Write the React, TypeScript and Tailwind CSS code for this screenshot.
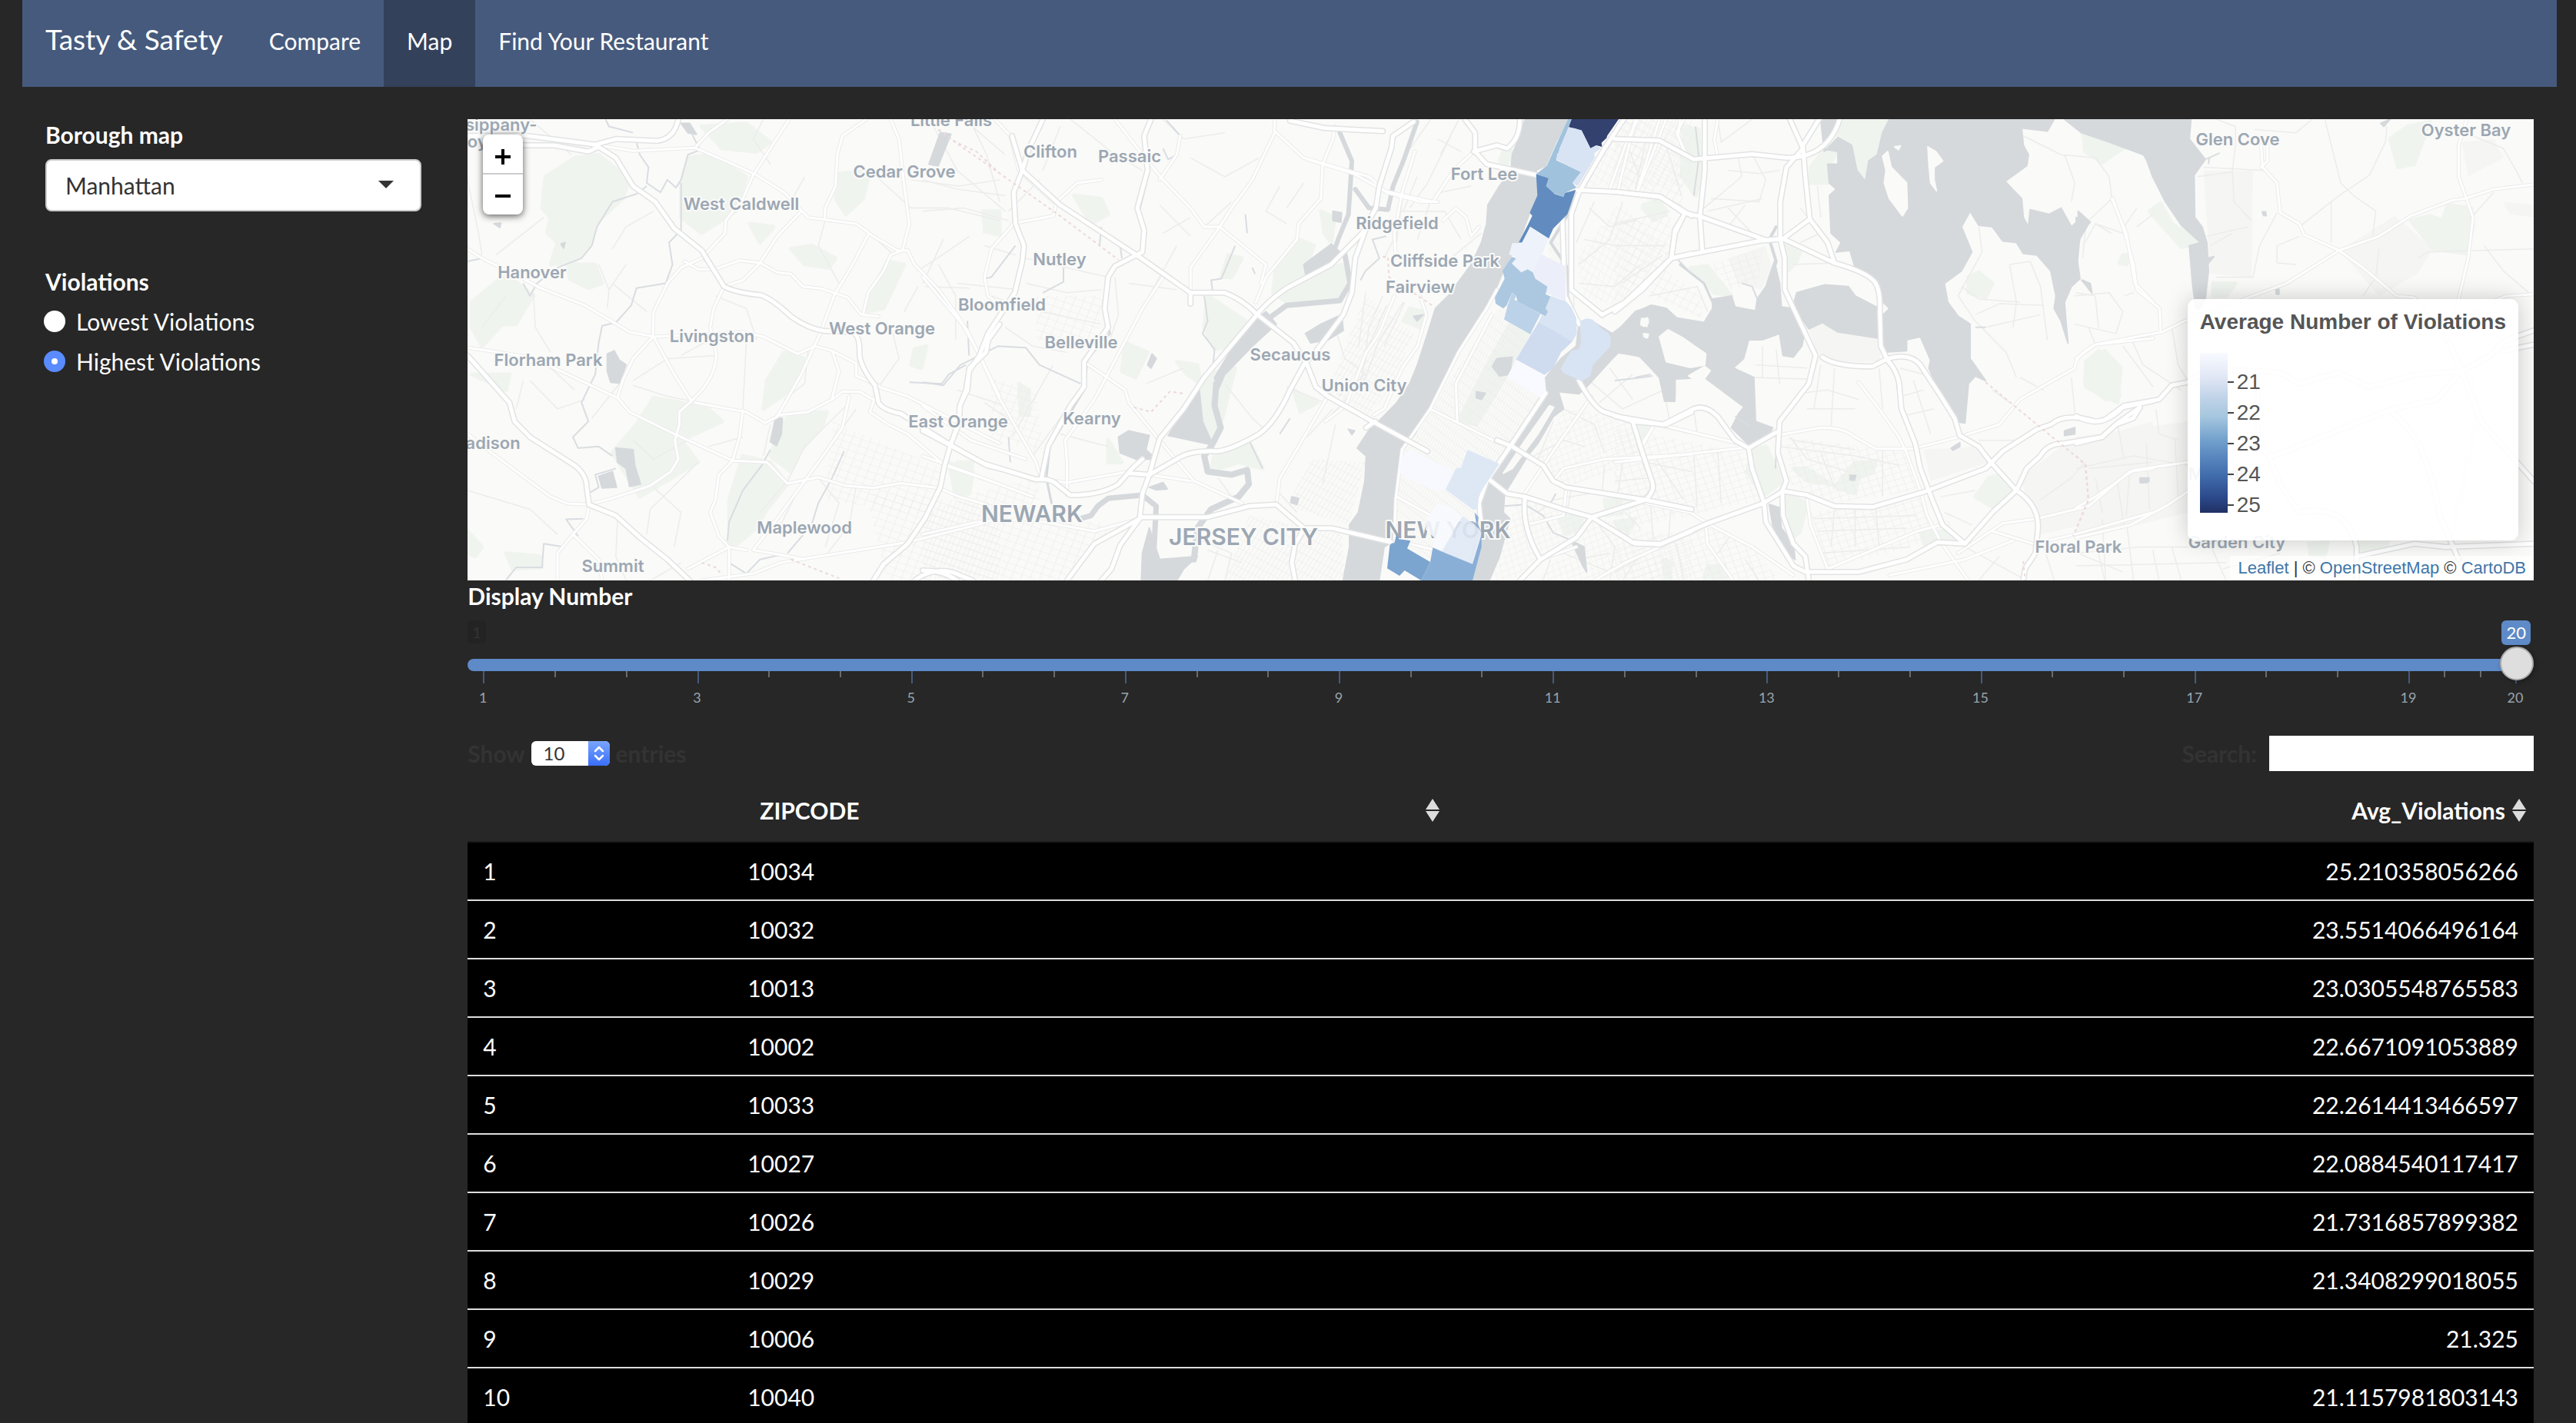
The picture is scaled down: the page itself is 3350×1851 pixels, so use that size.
import React from "react";

type Tile = {
  id: string;
  transform: string;
  grey?: string[];
  green: string[];
  water: string[];
  land?: string[];
  channels?: [string, number][];
  streams: string[];
  minor: string[];
  roads: string[];
  motorways: string[];
  borders: string[];
  grids?: [string, string][];
};

const tiles: Tile[] = [
  {
    id: "west",
    transform: "translate(600 140) scale(0.44643 0.40816)",
    green: [
      "M245 220 L330 160 L400 150 L490 230 L470 290 L390 370 L380 430 L330 490 L260 500 L280 430 L250 400 L260 350 L235 320 Z",
      "M660 160 L720 150 L830 220 L800 330 L700 400 L640 350 L640 240 Z",
      "M700 60 L830 50 L900 110 L860 140 L760 130 Z",
      "M30 620 L130 530 L210 600 L180 650 L160 690 L120 690 L60 760 L30 700 Z",
      "M310 500 L390 500 L410 560 L370 575 L315 545 Z",
      "M1240 490 L1290 500 L1230 640 L1180 650 L1195 590 Z",
      "M560 925 L640 940 L720 960 L760 1000 L640 1060 L690 1130 L520 1240 L440 1100 L510 1010 Z",
      "M960 975 L1065 970 L1050 1020 L990 1090 L960 1160 L900 1110 L930 1020 Z",
      "M820 1110 L900 1130 L950 1200 L890 1280 L860 1340 L780 1410 L780 1250 Z",
      "M940 780 L1000 800 L960 900 L880 960 L890 870 Z",
      "M1100 210 L1190 200 L1170 290 L1120 340 L1090 290 Z",
      "M960 450 L1020 440 L1090 480 L1070 510 L1000 500 Z",
      "M840 370 L910 380 L870 430 Z",
      "M18 1350 L60 1400 L40 1430 L18 1420 Z",
      "M30 850 L140 850 L130 900 Z",
      "M1520 330 L1568 330 L1568 405 L1525 395 Z",
      "M1320 770 L1355 760 L1340 830 L1310 820 Z",
      "M1420 1130 L1490 1160 L1480 1230 L1440 1240 Z",
      "M130 1420 L230 1430 L235 1465 L150 1470 Z",
    ],
    water: [
      "M425 785 L445 775 L460 805 L480 820 L460 878 L435 875 L425 840 Z",
      "M450 1085 L500 1090 L505 1140 L522 1200 L490 1207 L480 1150 L455 1130 Z",
      "M400 1175 L440 1160 L452 1210 L410 1212 Z",
      "M1395 80 L1422 85 L1385 185 L1362 180 Z",
      "M915 990 L935 990 L932 1040 L918 1077 L900 1065 Z",
      "M640 50 L665 50 L685 85 L660 80 Z",
      "M95 370 L115 368 L112 382 Z",
      "M290 435 L302 430 L298 448 Z",
    ],
    streams: [
      "M510 110 L520 150 L545 190 L540 240 L580 270 L600 230 L625 255 L640 230 L660 150 L695 135 L670 80",
      "M640 240 L640 390 L605 430 L615 500 L595 560 L510 575 L495 630 L450 685 L410 695 L400 750 L390 850 L350 940 L370 1000 L325 1050 L340 1085 L400 1080 L440 1110",
      "M450 1150 L390 1170 L400 1210 L370 1230",
      "M540 250 L510 275 L440 300 L395 380 L380 440 L350 480 L280 510 L220 560 L200 600 L180 560",
      "M900 1090 L875 1140 L820 1220 L780 1320 L775 1380",
      "M1115 1095 L1080 1180 L1040 1260 L1020 1330 L950 1420",
      "M130 1505 L160 1465 L235 1465 L240 1390 L300 1400",
      "M355 1310 L305 1312 L340 1365",
      "M1305 875 L1400 880 L1420 850 L1470 820",
      "M18 490 L60 480 M420 37 L430 60 L500 80",
      "M780 1450 L830 1485 L870 1440 L930 1425",
    ],
    minor: [
      "M18 1220 L200 1280 L280 1360 M130 600 L60 700 M210 590 L215 700 L260 780 M430 580 L425 640 M480 500 L430 580 L400 500",
      "M540 650 L440 560 M200 37 L320 150 M100 470 L240 350 M440 450 L480 380 L560 330 M18 230 L50 400 L60 470",
      "M460 880 L380 990 M500 885 L600 920 L670 935 M742 790 L600 800 L500 870 M830 750 L820 960 M740 600 L830 640 L860 740",
      "M660 1060 L560 1120 L500 1060 M540 1360 L550 1280 L690 1130 M560 1210 L640 1290 L620 1400 M455 1310 L450 1430 L480 1507",
      "M1000 220 L960 300 L990 330 M880 37 L850 100 L900 180 M1060 357 L1040 440 L1100 560 M1200 410 L1260 470",
      "M870 1290 L950 1190 L1000 1080 L1130 940 M1060 1100 L1150 960 M1040 1180 L1100 1260 L1060 1400 M1150 1205 L1130 1330 L1060 1430",
      "M1200 210 L1310 320 L1420 320 L1568 360 M1310 230 L1450 250 L1568 230 M1350 570 L1480 575 M1330 520 L1400 470 L1480 410",
      "M1250 690 L1275 800 L1215 890 M1290 650 L1330 570 M1480 37 L1530 150 L1568 300 M1390 500 L1440 600 L1440 740",
      "M180 870 L160 960 M200 870 L280 960 L360 930 M260 830 L330 900 M980 1220 L930 1330 M550 1507 L640 1450",
      "M700 480 L740 520 M740 730 L640 790 M820 1050 L720 1080 M900 1010 L880 1110 M1010 770 L1000 880 L940 930",
    ],
    roads: [
      "M390 118 L500 138 L680 128 L780 175 L860 215 L940 270 L1010 350 L1060 357 L1150 370 L1200 410 L1270 455 L1300 455 L1320 500 L1390 580 L1450 670 L1510 790 L1568 920",
      "M955 37 L850 215 L820 290 L770 360 L768 400 L700 480 L640 510 L600 560 L560 650 L558 730",
      "M1180 37 L1110 90 L1095 150 L1090 250 L1060 320 L1058 357",
      "M680 128 L720 80 L775 37",
      "M1250 37 L1275 100 L1290 250 L1305 370 L1285 455 L1250 470 L1230 520 L1185 590 L1170 660 L1215 665",
      "M990 330 L920 410 L870 495 L820 550 L765 570 L735 640 L725 700 L742 780 Q745 860 670 935 L635 970 L635 1010 L622 1060 L632 1120 L610 1160 L550 1205 L440 1245 L372 1265",
      "M650 490 L690 515 L740 515 L810 487 L870 495 L920 525 L960 530 L995 570 L1050 577 L1125 605 L1165 660",
      "M18 450 L60 480 L180 545 L230 575 L360 630 L490 715 L560 730 L660 725 L820 715 L880 730 L980 785 L1030 760 L1080 775 L1150 815 L1150 855 L1215 885",
      "M1185 405 L1140 500 L1085 600 L1045 720 L990 850 L920 985 L885 1005 L830 970 L680 940",
      "M560 730 L620 850 L670 935 M558 730 L500 800 L470 870 L455 925 L490 970 L620 1040 L790 1125 L890 1130 L950 1198 L1040 1178 L1120 1205 L1200 1212 L1280 1197 L1390 1212 L1450 1240 L1530 1265",
      "M18 765 L200 795 L300 845 L455 925",
      "M920 980 L1010 970 L1080 930 L1110 905 L1160 905 L1215 940",
      "M820 965 L810 1050 L790 1125 L750 1170 L740 1250 L725 1290 L750 1365 L780 1400 L830 1410",
      "M660 1470 L780 1400 L780 1507 M700 1507 L850 1485 L930 1450 L1300 1385 L1520 1325",
      "M18 1040 L100 1110 L260 1240 L310 1262 L372 1265 L365 1310 L325 1360 L280 1420 L280 1507",
      "M325 1360 L400 1440 L410 1507",
      "M1000 1190 L920 1310 L850 1410 L930 1425 L1000 1440",
      "M1215 890 L1190 970 L1245 1010 L1300 1040 L1408 1140 L1568 1200",
      "M1215 890 L1300 920 L1440 1000 L1568 1070",
      "M1130 920 L1110 1020 L1060 1100 L1000 1190",
      "M1080 775 L1100 840 L1080 925",
    ],
    motorways: [
      "M18 90 L180 88 L390 118 L450 100 L570 106 Q620 100 632 37",
      "M180 120 L270 120 L370 140 L400 125 L450 160 L500 250 L565 300 L620 385 L700 455 L765 570 Q800 590 870 597 Q900 605 960 665 Q1010 705 1060 712 L1140 715 Q1162 725 1160 790 Q1165 830 1205 885 L1215 940 Q1230 965 1280 975 L1330 1010 L1425 1075 L1530 1140 L1568 1150",
      "M18 790 L140 940 L155 1000 L200 1050 L330 1140 Q365 1170 365 1210 L372 1265 L450 1300 L520 1370 L600 1440 L665 1507",
      "M1568 690 L1535 740 L1528 780 L1480 830 L1470 900 L1452 950 L1450 1000 L1425 1075 L1408 1140 L1395 1210 L1350 1310 L1300 1390 L1230 1455 L1200 1507",
      "M1320 1507 Q1370 1465 1430 1480 L1490 1507",
    ],
    borders: ["M1390 70 L1440 110 L1500 140 L1568 210", "M700 1450 L740 1465 L760 1490", "M960 1440 L1100 1500"],
    grids: [
      ["M1180 1230 L1568 1260 L1568 1507 L1240 1507 Z", "g-newark"],
      ["M1080 1000 L1400 1150 L1350 1300 L1060 1250 Z", "g-newark"],
    ],
  },
  {
    id: "hackensack",
    transform: "translate(1200 140) scale(0.44643 0.40816)",
    green: [
      "M1030 500 L1095 420 L1140 440 L1110 520 L1160 530 L1220 500 L1240 560 L1200 610 L1060 620 L1020 590 Z",
      "M830 600 L940 680 L900 760 L850 770 L820 700 Z",
      "M820 850 L910 830 L870 1000 L830 1060 L805 960 Z",
      "M850 1100 L950 1060 L990 1150 L920 1130 L840 1160 Z",
      "M590 750 L655 780 L620 860 L580 840 Z",
      "M440 280 L520 290 L540 340 L490 370 Z",
      "M1160 330 L1200 350 L1190 430 L1170 400 Z",
      "M180 335 L220 335 L215 400 L180 395 Z",
      "M1080 900 L1150 940 L1100 970 Z",
      "M540 1060 L580 1130 L540 1130 Z",
      "M100 1130 L145 1130 L130 1230 L100 1220 Z",
      "M890 470 L930 480 L900 540 L870 540 Z",
      "M740 810 L800 820 L810 880 L770 850 Z",
      "M280 880 L310 900 L310 980 L285 980 Z",
      "M1420 640 L1460 650 L1450 700 L1400 680 Z",
    ],
    water: [
      "M1110 500 L1190 435 L1215 460 L1180 510 L1115 530 Z",
      "M1195 330 L1220 335 L1218 365 L1195 360 Z",
      "M1000 650 L1030 690 L960 760 L880 850 L860 900 L850 860 L900 770 L930 710 Z",
      "M805 895 L815 1000 L845 1075 L715 1045 Z",
      "M640 1420 L660 1340 L690 1440 L800 1430 L760 1470 L740 1507 L637 1507 Z",
      "M570 1050 L600 1030 L660 1045 L650 1090 L680 1120 L620 1120 L575 1100 Z",
      "M1115 720 L1160 690 L1220 660 L1225 710 L1180 740 L1130 750 Z",
      "M660 1210 L700 1195 L712 1215 L680 1218 Z",
      "M1075 1240 L1095 1245 L1090 1265 L1072 1258 Z",
      "M20 180 L60 80 L82 85 L45 185 Z",
      "M668 785 L680 800 L665 830 L655 820 Z",
      "M1430 665 L1458 660 L1440 680 Z",
      "M1240 1025 L1258 1030 L1250 1042 Z",
    ],
    channels: [
      ["M1215 80 L1250 170 L1245 260 L1240 340 L1210 420 L1200 450", 6],
      ["M1230 470 L1245 560 L1215 615 L1060 630 L1010 670", 7],
      ["M855 880 L850 950 L868 1020 L840 1080 L820 1110 L830 1160 L900 1170 L945 1155 L950 1200 L920 1240 L840 1280 L800 1340 L790 1440", 8],
      ["M672 1440 L680 1270 L640 1235 L540 1245 L510 1270 L490 1300 L460 1310", 7],
      ["M1440 45 L1400 170 L1370 250 L1355 325 L1300 320 L1260 260", 6],
      ["M660 200 L630 330 L650 400 L640 460 L545 520 L530 640 L545 720 L480 800 L470 900 L370 1080 L360 1180 L375 1260", 3],
    ],
    streams: [
      "M0 875 L60 885 L110 820 L220 760 L300 765 L340 820 L460 880",
      "M270 440 L200 540 L180 545",
      "M410 510 L410 555 L350 590",
      "M820 600 L830 680 L815 720 L850 770 L845 830",
      "M910 440 L870 545 L840 550 L845 590",
      "M700 130 L715 165 L740 150 L750 90 L710 40",
      "M940 340 L945 400 M960 510 L968 530 M990 1150 L950 1060",
      "M1070 990 L1040 1040 M250 1050 L255 1130",
      "M520 380 L515 440 M575 440 L580 480",
      "M1350 410 L1310 420 L1330 480 L1290 520 L1275 550",
      "M130 680 L135 790",
    ],
    minor: [
      "M20 37 L100 200 L240 330 M120 37 L240 150 M340 230 L250 330 M400 60 L350 200 M430 37 L560 150 L640 200 M300 480 L420 510 L540 540",
      "M300 560 L420 590 L520 580 M200 600 L300 640 L520 690 M560 540 L570 660 L545 740 M180 440 L270 470 M740 440 L640 640 L560 800 L500 930",
      "M0 230 L100 260 L240 280 M0 330 L120 320 L250 360 M60 420 L0 560 M100 560 L280 580 M240 700 L320 760 L420 780",
      "M700 37 L760 100 L880 80 M780 160 L880 220 L980 160 M820 380 L900 300 M1040 250 L1000 330 L1060 370 M1110 240 L1060 320",
      "M700 400 L780 350 M690 310 L780 410 M600 560 L740 580 M650 880 L760 830 M880 880 L960 990 L1000 1030 M1170 940 L1060 890",
      "M1200 700 L1230 800 L1290 850 L1210 920 M1290 590 L1270 760 M1340 600 L1300 700 L1290 780 M1400 620 L1330 740 L1290 860 L1190 980",
      "M1480 37 L1420 130 M1500 100 L1568 140 M1400 270 L1380 430 M1380 330 L1520 330 L1568 420 M1440 220 L1400 330",
      "M830 1410 L930 1450 M750 1350 L900 1420 L880 1507 M860 1180 L900 1240 M1040 1230 L1090 1290 M830 1507 L860 1410",
      "M380 820 L260 1050 M440 930 L320 1110 M100 900 L240 950 M180 940 L260 1000 M400 1040 L540 1080",
    ],
    roads: [
      "M560 37 L640 150 L700 230 L780 320 L820 380 L865 380 L1000 500 L985 560",
      "M1025 80 L960 230 L900 320 L865 380 L780 510 L780 590",
      "M1025 37 L1025 75 L1110 160 L1300 220 L1350 270 L1450 300 L1500 300",
      "M1200 60 L1195 100 L1165 180 L1160 290 L1095 370 L1090 420 L1000 540 L970 620",
      "M0 540 L130 710 L165 790 L220 920 L330 1130 L345 1185",
      "M470 810 L590 900 L600 940 L690 1060 L790 1190 L930 1260",
      "M260 370 L380 345 L390 300 L450 240 L520 230",
      "M1180 920 L1100 1070 L1040 1180 L1030 1265",
      "M420 1235 L420 1130 L415 1060 L500 930 L640 640 L700 540",
      "M345 1185 L420 1195 L600 1160 L780 1190",
      "M0 950 L140 1060 L300 1120",
      "M210 37 L255 90 L280 200 L380 300",
      "M0 1110 L150 1170 L320 1240 M0 1360 L160 1320 L330 1310 M632 1310 L500 1350 L300 1310",
      "M750 90 L740 150 L690 230",
      "M265 370 L200 450 L180 540 L190 600 L240 640",
    ],
    motorways: [
      "M350 37 L310 130 L290 200 L265 270 L270 370 L295 440 L290 490 L268 590 L190 720 L165 790 L135 840 L130 900 L108 950 L105 1010 L80 1075",
      "M665 37 L645 90 L655 200 L625 320 L645 390 L640 460 L560 505 L540 540 L530 640 L540 700 L470 810 L470 890 L430 950 L365 1080 L345 1185",
      "M260 90 L290 200 L400 310 L630 475 L780 590 L880 590 Q930 610 975 660 L1080 750 L1120 820 L1145 890 L1180 920 L1310 1000 L1470 1095",
      "M1430 45 L1370 90 L1365 130 L1330 250 L1320 320 L1280 400 L1190 500 L1060 575 Q1000 620 970 665 L820 860 L760 960 L690 1055 L660 1170 L640 1230 L632 1310 L575 1395 L550 1470 L520 1507",
      "M1290 390 L1260 480 L1250 590 L1225 660 L1150 770 L1110 820 L1070 900 Q1030 1000 980 1040 Q900 1090 860 1095 Q780 1090 740 1120 L660 1170 L600 1165",
      "M1070 42 L1170 65 L1340 75",
      "M0 1030 L78 1075 L180 1135 L330 1185 Q370 1180 390 1200 L430 1235 Q520 1235 570 1200 L610 1150 L640 1120",
      "M632 1305 L830 1305 L950 1270 L1030 1265 L1110 1340 L1190 1340 L1365 1385",
      "M1110 1345 L1085 1390 L1075 1450 L1085 1507",
      "M632 1310 L500 1390 L420 1507",
      "M780 590 L780 625",
      "M0 1475 Q60 1475 100 1507",
    ],
    borders: [
      "M45 70 L120 130 L160 160 L400 345 L570 485",
      "M615 955 L665 970 L720 905 L765 912",
      "M1340 475 L1355 475 L1358 540 L1430 590 L1490 635",
    ],
    grids: [
      ["M150 1230 L330 1180 L350 1300 L560 1330 L420 1507 L0 1507 L0 1300 Z", "g-newark"],
      ["M200 860 L330 900 L350 1100 L200 1060 Z", "g-newark"],
      ["M1130 1120 L1290 1130 L1240 1330 L1060 1270 Z", "g-hudson"],
      ["M950 1300 L1220 1360 L1230 1507 L880 1507 Z", "g-hudson"],
      ["M1290 600 L1430 720 L1360 900 L1300 980 L1180 900 Z", "g-hudson"],
      ["M330 600 L530 600 L500 780 L330 740 Z", "g-newark"],
    ],
  },
  {
    id: "manhattan",
    transform: "translate(1700 140) scale(0.33333 0.40816)",
    green: [
      "M790 690 L870 720 L815 803 L660 1010 L590 1000 L690 840 Z",
      "M770 130 L800 140 L780 180 L750 170 Z",
      "M1310 310 L1370 295 L1400 340 L1350 360 Z",
      "M400 640 L450 650 L440 700 L380 680 Z",
      "M1160 1250 L1220 1240 L1230 1290 L1170 1300 Z",
      "M980 1310 L1060 1290 L1080 1340 L1010 1360 Z",
      "M1290 1010 L1340 1020 L1305 1070 Z",
      "M1390 1440 L1420 1450 L1415 1507 L1395 1507 Z",
    ],
    water: [
      "M850 37 L825 100 L800 150 L795 200 L750 250 L705 310 L700 370 L680 430 L640 500 L550 600 L500 640 L470 720 L430 820 L400 880 L350 940 L290 990 L240 1030 L195 1085 L230 1110 L225 1190 L200 1290 L165 1330 L165 1400 L140 1507 L280 1507 L300 1400 L340 1380 L345 1280 L358 1180 L365 1100 L420 1040 L480 950 L590 770 L660 680 L740 570 L770 510 L830 420 L870 330 L897 280 L893 200 L930 185 L970 110 L1020 37 Z",
      "M930 860 L990 800 L1050 760 L1060 690 L1110 680 L1190 720 L1240 690 L1290 650 L1340 630 L1400 640 L1440 670 L1500 690 L1500 740 L1370 700 L1370 790 L1420 830 L1500 820 L1500 880 L1440 880 L1430 935 L1395 935 L1390 860 L1340 800 L1215 780 L1190 800 L1090 890 L1060 912 L980 905 L1000 960 L960 985 L900 1070 L860 1110 L800 1190 L770 1230 L765 1290 L790 1310 L750 1430 L710 1507 L645 1507 L680 1400 L670 1260 L710 1190 L800 1080 L935 920 Z",
      "M740 800 L800 795 L790 850 L750 855 L722 825 Z",
      "M660 905 L695 910 L680 930 L660 925 Z",
      "M1030 1380 L1080 1400 L1090 1480 L1075 1460 Z",
    ],
    land: [
      "M945 950 L962 955 L900 1040 L800 1150 L765 1165 L850 1060 Z",
      "M1305 672 L1330 675 L1325 697 L1303 693 Z",
      "M1312 720 L1330 722 L1328 733 L1314 730 Z",
    ],
    channels: [["M1180 100 L1110 190 L1060 260 L1010 350 L950 430 L1015 510 L1015 600 L1058 690", 4]],
    streams: ["M770 1270 L850 1265 L920 1300 L960 1355 L1020 1375", "M970 1230 L950 1260", "M1440 480 L1500 530", "M1280 860 L1340 850"],
    minor: [
      "M1040 700 L1040 600 M1230 300 L1180 420 L1060 500 M1280 60 L1200 200 L1180 260 M1320 110 L1280 260 M1080 420 L1200 440 L1400 440",
      "M1060 560 L1200 570 L1300 500 M1100 320 L1180 380 L1280 360 M1240 100 L1310 250 M1400 120 L1460 280 M1120 300 L1050 430",
      "M1140 940 L1270 850 M1230 960 L1390 900 M1100 870 L1230 960 M1180 830 L1270 930 M1000 960 L1120 1010 L1160 1100 M1340 1010 L1500 1040",
      "M860 1120 L1000 1060 L1080 1080 M900 1120 L960 1000 M1320 1130 L1500 1160 M1030 1220 L1010 1300 M1160 1140 L1150 1230 M1230 1130 L1210 1240",
      "M900 1290 L960 1250 L1100 1230 M850 1330 L960 1300 M1130 1320 L1200 1400 L1180 1507 M1240 1290 L1300 1340 M1000 1420 L1180 1480",
      "M1340 1260 L1350 1390 M1420 1260 L1410 1370 M1300 1420 L1230 1507 M950 1440 L920 1507 M1060 1440 L1180 1420",
      "M590 40 L520 150 M560 90 L470 240 L400 320 M480 300 L430 420 M520 270 L640 250 M560 480 L680 400 M300 480 L350 400",
      "M310 630 L240 760 L200 900 M380 620 L300 760 M0 1050 L100 960 M60 1200 L110 1010 M60 880 L120 940",
    ],
    roads: [
      "M480 960 L750 1070 M480 960 L590 780 L700 640 L740 580",
      "M340 1390 L345 1250 L370 1090 L480 960",
      "M585 1000 L580 880 L720 660",
      "M0 165 L180 210 L300 265 L490 300",
      "M420 140 L370 270 L340 400 L345 480",
      "M490 300 L570 200 L650 140",
      "M530 360 L580 320 L620 350 L640 410 L670 380",
      "M440 600 L465 660 L430 760 L370 830 L300 960 L260 980",
      "M340 600 L280 720 L230 780 L150 950 L70 1000",
      "M1300 1080 L1350 1015 M960 1190 L1000 1150 L1160 1120 L1500 1105",
      "M1110 920 L980 1070 L840 1240",
      "M1170 100 L1370 105 L1500 165 M1470 37 L1440 80 L1480 150",
      "M910 1440 L1050 1400 M350 1240 L550 1330 M400 1390 L500 1410",
      "M1180 260 L1250 100 L1290 37 M1290 265 L1400 37",
      "M850 1330 L1000 1300 L1010 1215",
      "M1120 1507 L1240 1450 L1390 1395",
    ],
    motorways: [
      "M615 37 L655 80 L655 140 L700 180 L895 215",
      "M650 140 L740 120 L780 130 Q830 100 830 37",
      "M1235 37 L1160 130 L1060 270 L1030 340 L1030 580 L1150 660",
      "M995 340 L1005 600 L1060 690",
      "M1050 262 L1200 268 L1380 285 L1500 345",
      "M1150 660 L1240 620 L1420 480 L1500 465",
      "M1465 350 L1435 400 L1420 480",
      "M1060 870 Q1120 960 1160 970 L1270 1000 L1400 1010 L1500 970",
      "M930 910 L800 1070 L700 1190 L670 1260 L680 1340 L650 1440",
      "M710 1185 L780 1230 L850 1240 L1000 1280 L1110 1305 L1280 1390 L1380 1390 L1500 1350",
      "M740 1060 L800 1080 L920 1140 L960 1190 L1010 1210 L1320 1250 L1500 1280",
      "M1110 1305 L1050 1370 L910 1440 L830 1507",
      "M1110 1305 L1320 1250 Q1360 1220 1345 1190 L1300 1080 L1270 1000",
      "M850 1240 Q835 1340 910 1440",
      "M230 1020 L265 1000",
    ],
    borders: [],
    grids: [
      ["M360 1100 L480 960 L780 600 L930 900 L700 1190 L650 1300 L680 1400 L640 1507 L320 1400 L350 1250 Z", "g-manhattan"],
      ["M940 420 L1010 340 L1020 620 L950 600 Z", "g-manhattan"],
      ["M1050 480 L1220 300 L1400 450 L1200 630 L1080 600 Z", "g-bronx"],
      ["M1200 37 L1500 37 L1500 250 L1080 250 Z", "g-bronx"],
      ["M1000 960 L1250 990 L1300 1130 L1000 1210 L900 1120 Z", "g-queens"],
      ["M820 1240 L1110 1310 L910 1440 L800 1507 L720 1507 Z", "g-queens"],
      ["M1110 1305 L1500 1380 L1500 1507 L900 1507 Z", "g-queens"],
    ],
  },
  {
    id: "sound",
    transform: "translate(2100 140) scale(0.44643 0.40816)",
    grey: [
      "M565 705 L605 685 L650 715 L770 735 L775 810 L640 810 L590 780 Z",
      "M1180 1180 L1300 1080 L1568 1000 L1568 1280 L1240 1360 Z",
      "M900 1090 L1060 1080 L1090 1130 L920 1190 Z",
      "M330 480 L440 440 L460 520 L425 580 L360 560 Z",
    ],
    green: [
      "M200 60 L245 70 L250 230 L235 280 L195 220 Z",
      "M570 190 L620 120 L650 140 L625 180 L620 240 L570 240 Z",
      "M80 320 L120 295 L150 325 L110 355 Z",
      "M220 510 L270 505 L340 600 L290 590 Z",
      "M1030 540 L1060 525 L1100 560 L1080 605 L1030 590 Z",
      "M1375 810 L1410 775 L1460 830 L1470 920 L1430 930 L1370 880 Z",
      "M1365 80 L1480 130 L1420 175 L1370 140 Z",
      "M400 1090 L440 1080 L490 1190 L430 1240 L385 1160 Z",
      "M495 1230 L560 1260 L540 1350 L520 1370 Z",
      "M700 1130 L760 1130 L750 1165 L710 1180 L700 1230 L640 1210 Z",
      "M1090 1180 L1120 1170 L1160 1230 L1110 1280 L1050 1240 Z",
      "M890 1350 L960 1350 L1010 1390 L900 1390 Z",
      "M0 1320 L60 1310 L30 1370 Z",
      "M500 440 L540 460 L530 490 L505 520 Z",
      "M1480 470 L1500 470 L1490 500 L1470 495 Z",
      "M520 1150 L560 1150 L630 1200 L560 1190 Z",
      "M70 1010 L110 1020 L80 1060 Z",
      "M270 1460 L320 1460 L330 1507 L260 1507 Z",
      "M640 37 L810 37 L780 80 L765 150 L740 180 L730 235 L705 200 L690 120 L650 90 Z",
    ],
    water: [
      "M600 37 L645 37 L640 80 L600 130 L650 140 L650 180 L620 180 L625 240 L645 260 L625 280 L630 400 L660 430 L645 460 L685 455 L700 510 L740 530 L770 570 L770 640 L700 600 L680 570 L610 565 L530 590 L520 630 L565 705 L605 685 L650 715 L770 735 L780 780 L850 775 L850 740 L890 730 L920 805 L915 830 L950 920 L990 1000 L1020 1005 L1030 880 L1050 855 L1080 870 L1035 800 L1035 690 L1000 665 L970 620 L960 560 L1010 520 L1040 460 L1010 380 L1035 330 L1060 375 L1100 380 L1130 425 L1170 430 L1190 465 L1230 470 L1270 520 L1285 600 L1280 640 L1300 680 L1320 750 L1315 690 L1310 620 L1330 570 L1355 545 L1345 470 L1360 390 L1385 365 L1350 330 L1350 360 L1330 380 L1300 320 L1265 340 L1210 325 L1205 380 L1190 350 L1185 290 L1137 235 L1200 185 L1205 150 L1190 120 L1185 65 L1260 75 L1280 37 L800 37 L780 80 L765 150 L740 170 L730 235 L705 200 L690 120 L650 95 L610 140 Z",
      "M1310 37 L1568 37 L1568 200 L1540 150 L1440 110 L1360 80 Z",
      "M0 720 L60 650 L110 630 L150 640 L180 670 L260 685 L285 640 L285 610 L340 600 L350 635 L410 648 L415 610 L440 570 L465 490 L480 560 L485 635 L520 640 L550 730 L545 760 L520 795 L490 790 L480 720 L430 740 L390 740 L375 800 L345 830 L405 860 L410 1000 L460 1020 L440 1060 L395 1080 L340 1020 L370 955 L260 865 L275 830 L180 870 L175 935 L145 935 L130 860 L105 830 L70 790 L0 780 Z",
      "M450 1265 L480 1275 L485 1340 L520 1390 L525 1440 L500 1420 L460 1330 Z",
      "M1360 550 L1385 560 L1390 590 Z",
      "M1310 1030 L1340 1020 L1340 1040 L1310 1045 Z",
      "M1530 1180 L1555 1180 L1550 1195 L1530 1195 Z",
      "M980 1085 L1005 1068 L1005 1080 L985 1092 Z",
      "M685 1172 L702 1172 L698 1188 L685 1186 Z",
    ],
    land: [
      "M795 140 L805 190 L850 240 L852 320 L838 345 L800 290 L785 240 L790 200 L780 155 Z",
      "M912 125 L935 140 L955 170 L930 190 L930 230 L937 265 L920 240 L915 180 Z",
      "M130 730 L155 708 L200 735 L265 785 L262 820 L220 828 L150 810 Z",
      "M78 675 L95 670 L98 685 L85 697 L76 690 Z",
      "M815 125 L832 122 L826 134 Z",
      "M700 560 L735 545 L710 575 Z",
      "M780 625 L794 640 L780 655 Z",
      "M180 870 L260 865 L370 955 L335 1000 L270 950 L180 960 Z",
      "M215 855 L262 825 L278 838 L250 880 Z",
      "M85 722 L98 724 L92 734 Z",
    ],
    channels: [
      ["M470 380 L450 420 L470 490 L445 570", 4],
      ["M190 500 L260 560 L285 620", 3],
    ],
    streams: ["M370 560 L400 570 L415 610", "M235 60 L245 160 L230 280", "M1050 700 L1080 700", "M0 870 L80 860 L110 855", "M470 1100 L468 1150", "M335 970 L390 1015"],
    minor: [
      "M300 37 L310 110 L400 37 M360 160 L370 220 L260 320 M400 148 L440 230 L420 300 L280 290 M330 200 L420 210 L480 200",
      "M330 320 L400 400 M270 330 L430 290 M380 310 L330 380 M590 250 L600 350 M540 320 L570 360 M540 430 L600 400 M520 500 L640 495",
      "M1190 90 L1300 150 L1400 160 L1440 220 L1448 290 M1310 150 L1340 240 L1330 300 M1060 380 L1070 460 L1000 600 L1050 680 L1140 780 L1170 860",
      "M1010 570 L1060 610 L1180 620 M1050 660 L1120 625 L1250 630 M1150 500 L1210 490 L1240 570 L1260 740 M1150 500 L1170 620 L1160 700 M1080 700 L1240 660",
      "M1340 600 L1440 590 L1480 650 L1460 720 L1340 690 M1370 430 L1400 370 L1480 400 M1520 380 L1568 340 M1448 290 L1380 360",
      "M430 760 L430 860 M410 820 L560 830 M470 770 L480 880 M400 860 L560 865 M600 820 L580 960 M640 830 L630 1015 M560 960 L700 960",
      "M540 910 L620 900 L710 930 M770 830 L780 960 M830 830 L900 850 M835 920 L900 900 M850 980 L930 960 M870 870 L920 1040",
      "M510 1050 L560 1120 L680 1160 M520 1060 L700 1090 M600 1100 L640 1210 M780 1090 L780 1240 M480 1080 L700 1110 L830 1140",
      "M640 1280 L630 1400 M700 1275 L700 1400 M760 1275 L770 1400 M580 1310 L880 1300 M590 1350 L850 1340 M600 1420 L860 1400",
      "M1100 900 L1150 940 M1250 900 L1180 860 M1060 1060 L1180 1060 L1260 1010 M1330 860 L1340 970 M1400 755 L1380 700 M1480 760 L1568 890",
      "M1240 1250 L1330 1180 L1370 1130 M1380 1150 L1568 1130 M1400 1180 L1420 1290 M1500 1160 L1490 1300 M1420 1310 L1430 1507",
      "M1020 1400 L1200 1507 M950 1240 L1050 1220 M960 1290 L1040 1330 M1120 1430 L1060 1507 M1250 1400 L1280 1507 M1350 1420 L1480 1480",
      "M0 1190 L100 1180 M120 1120 L200 1250 M230 1110 L240 1270 M300 1100 L310 1260 M150 940 L160 1000 M230 960 L240 1040",
      "M0 1480 L130 1400 M180 1390 L200 1507 M340 1360 L300 1420 M380 1440 L420 1507 M0 370 L160 330 M20 560 L140 470 M100 600 L240 570 L270 650",
    ],
    roads: [
      "M710 875 L770 960 L825 1045 L850 1100 L890 1220 L910 1300 L950 1385 L1030 1507",
      "M470 1045 L600 1020 Q670 1020 700 1050 L760 1087 L870 1087 L1000 1050 L1120 1010 L1180 930 L1340 830 Q1340 790 1400 755 L1568 735",
      "M1448 290 L1490 400 L1515 560 L1568 620",
      "M1230 1310 L1380 1270 L1500 1160 L1568 1150",
      "M1220 1390 L1340 1360 L1568 1290",
      "M1000 1420 L1130 1325 L1230 1310 M1100 1350 L1220 1390",
      "M560 1250 L570 1330 L620 1470 L880 1350 L970 1325",
      "M50 1000 L80 1120 L110 1200 Q100 1260 0 1290",
      "M115 1010 L75 1090 M0 1130 L370 1085 M130 1010 L360 1070",
      "M0 1240 L220 1290 L270 1325 L400 1400 L520 1490 M265 1330 L270 1390 L345 1507",
      "M800 1490 L1020 1440 L1160 1380",
      "M300 37 L290 100 L300 160",
      "M130 37 L65 265 M60 37 L10 260",
      "M190 37 L185 90 L205 150",
    ],
    motorways: [
      "M0 268 L130 283 L200 335 L250 347 L440 422 L490 418 L640 495 Q740 525 760 560 Q775 590 772 650 L775 760 L795 805 Q830 850 830 900 L835 960 L875 1070 L890 1150 L925 1250 L955 1330 L1020 1390",
      "M510 37 L548 130 L500 190 L482 300 L482 418 L495 480 L495 580 L585 790 L565 880 L480 1000 L475 1100 L500 1190 L488 1220 L490 1300 L520 1390 L555 1430 L565 1507",
      "M595 37 L548 120 L555 220 L568 355 L490 418 M568 355 L620 430 L640 495",
      "M655 37 Q620 160 500 160 L400 148 L230 165 L130 105 L0 100",
      "M262 37 L262 200 L248 347 L255 460",
      "M0 650 L80 580 L165 480 L255 460 L420 425 L490 418 M200 345 L175 390 L165 480",
      "M605 795 Q640 825 750 825 L795 800 Q860 780 890 820 L950 920 L990 990 L1005 1045 L1060 1080 L1095 1130 L1170 1220 Q1240 1270 1232 1350 L1225 1420 L1195 1470 L1190 1507",
      "M0 983 L140 1010 L230 960 Q265 945 300 985 L350 1060 L390 1085 L470 1035",
      "M390 1085 L400 1150 L435 1260 L440 1320 L520 1460 L555 1480",
      "M0 1350 L50 1385 L130 1393 L270 1325 L430 1262 L490 1222 L560 1235 L640 1270 L750 1273 L900 1225 L1080 1150 L1130 1095 L1230 1025 L1270 1010 Q1310 970 1400 1000 Q1440 1000 1480 955 L1568 935",
      "M555 1480 L710 1480 L850 1440 L940 1385 L1020 1390 L1100 1290 L1170 1220 L1200 1150 L1240 1110 Q1260 1070 1310 1070 L1420 1050 L1460 1010 L1510 990 L1530 955",
    ],
    borders: ["M1080 875 L1230 1010 L1370 1135 L1380 1250 L1335 1365", "M1190 1445 L1195 1507"],
    grids: [
      ["M0 37 L190 37 L200 330 L0 260 Z", "g-bronx"],
      ["M0 360 L160 340 L165 480 L0 640 Z", "g-bronx"],
      ["M120 500 L260 600 L250 670 L100 600 Z", "g-bronx"],
      ["M280 500 L430 450 L420 560 L340 580 Z", "g-queens"],
      ["M0 1020 L380 1100 L430 1250 L0 1350 Z", "g-queens"],
      ["M0 1400 L270 1330 L400 1400 L480 1507 L0 1507 Z", "g-queens"],
      ["M560 1290 L900 1240 L930 1380 L620 1470 Z", "g-queens"],
      ["M500 1050 L860 1100 L880 1220 L640 1260 L510 1200 Z", "g-queens"],
    ],
  },
  {
    id: "east",
    transform: "translate(2700 140) scale(0.41453 0.40816)",
    grey: [
      "M400 200 L555 200 L550 540 L420 530 Z",
      "M825 455 L1000 345 L1120 450 L1070 530 L950 600 Z",
      "M1210 110 L1310 100 L1340 160 L1230 220 Z",
      "M0 1050 L350 1000 L350 1290 L0 1380 Z",
      "M1340 300 L1435 310 L1435 350 L1360 340 Z",
    ],
    green: [
      "M1050 360 L1110 345 L1150 360 L1165 310 L1240 320 L1245 380 L1225 465 L1120 450 Z",
      "M985 100 L1040 60 L1110 45 L1060 180 L1010 190 Z",
      "M230 330 L265 305 L300 370 L390 430 L330 445 Z",
      "M30 810 L90 775 L140 830 L130 940 L30 890 Z",
      "M20 85 L145 130 L75 175 Z",
      "M400 1130 L460 1140 L450 1180 Z",
      "M430 560 L500 560 L470 600 L430 600 Z",
      "M730 1390 L790 1385 L780 1430 L735 1425 Z",
      "M890 1385 L980 1380 L970 1405 L890 1410 Z",
    ],
    water: [
      "M0 37 L360 37 L355 100 L405 165 L370 215 L372 350 L395 380 L410 430 L415 520 L405 610 L385 645 L375 640 L365 560 L355 440 L390 430 L330 375 L280 300 L240 220 L215 150 L120 100 L0 60 Z",
      "M0 350 L40 368 L10 420 L0 540 Z",
      "M20 550 L40 560 L45 585 Z",
      "M200 1185 L228 1180 L228 1192 L202 1196 Z",
      "M410 480 L432 475 L415 495 Z",
      "M955 50 L985 37 L965 60 Z",
      "M584 332 L594 332 L596 344 L588 344 Z",
      "M626 580 L636 578 L636 595 L628 594 Z",
    ],
    streams: ["M405 165 L450 145", "M415 180 L418 160"],
    minor: [
      "M440 37 L500 60 L500 120 L490 200 L495 300 L550 360 M380 220 L490 205 M400 190 L590 200 M410 410 L540 380 M420 440 L490 400",
      "M630 335 L575 440 L555 540 L440 540 M700 380 L800 300 L840 270 L920 215 L970 110 L975 60 M780 37 L830 240 L870 280 L940 330 L930 410",
      "M560 70 L690 80 L740 37 M800 300 L800 430 M700 410 L630 440 L630 495 L690 500 M1075 480 L1100 460 L1435 450",
      "M1220 80 L1340 130 L1380 200 L1400 240 M1130 70 L1210 90 M1240 350 L1310 270 M1280 440 L1340 520 L1420 590",
      "M950 450 L940 540 L900 600 M30 380 L20 480 M110 400 L60 370 M190 320 L150 380 M0 590 L60 600 L70 700 M150 600 L180 590",
      "M170 730 L210 820 L330 900 M300 700 L320 820 L350 870 M250 960 L260 1040 L320 1060 M130 1010 L150 1120 M0 1150 L180 1110 L350 1140",
      "M220 1070 L230 1280 M130 1200 L150 1330 M310 1060 L320 1240 M0 1420 L200 1400 L400 1400 M240 1410 L260 1507 M300 1400 L330 1507",
      "M0 1460 L470 1450 M60 1380 L90 1507 M160 1340 L180 1507 M420 1390 L470 1507 M460 1470 L640 1420",
    ],
    roads: [
      "M0 1370 L170 1330 L290 1265 L370 1210",
      "M580 120 L585 190 L630 240 L640 335 L700 370 L715 405 L825 455 L900 510 L1005 600 L1060 605 L1100 650 L1170 750 L1240 870 L1260 980",
      "M600 120 L600 170 L580 190",
      "M0 800 L60 755 L270 715 L340 680 L500 620 L660 560 L825 455 L950 410 L1050 345 L1180 295 L1220 290 L1310 260 L1435 245",
      "M1225 37 L1200 120 L1200 220 L1245 350 L1230 480 L1190 650",
      "M265 715 L262 640 L190 580 L180 500 L150 390 L115 290",
      "M0 1275 L60 1240 L180 1155 L350 1130",
      "M1190 700 L1300 620 L1350 600 L1435 595",
      "M1260 980 L1180 1350",
      "M570 840 L570 1040 L600 1100",
    ],
    motorways: [
      "M0 983 Q50 1010 90 995 L150 950 L260 930 L300 885 L350 875 Q400 820 640 845 L700 880 L820 845 L920 890 L1070 850 L1210 840 L1300 790 L1340 745 L1435 710",
      "M0 1070 L80 1050 L130 1005 L200 955",
      "M1340 775 L1435 755",
      "M560 1080 L620 1110 L980 965 L1130 930 L1210 840",
      "M600 1100 L640 1200 L700 1290 Q850 1260 880 1400 L880 1507",
      "M880 1430 L1060 1390 L1160 1400 L1435 1390",
      "M980 965 Q1100 1040 1140 1300 L1200 1440",
      "M1170 750 L1210 840 L1270 1000 L1435 1190",
    ],
    borders: ["M0 1110 L30 1140 L38 1250 L0 1345"],
  },
];

const zones: [string, string, number][] = [
  ["#33416f", "M1030 37 L1215 37 L1170 90 L1168 97 L1148 112 L1150 125 L1128 120 L1105 130 L1070 72 L1045 70 L1020 62 Z", 1],
  ["#a0c2dd", "M1018 37 L1032 37 L1020 62 L985 130 L985 145 L972 150 L980 155 L972 168 L1068 205 L1035 240 L1050 255 L1005 272 L1000 285 L960 272 L932 250 L942 225 L893 212 L935 185 L970 120 Z", 1],
  ["#d8e3f3", "M1020 62 L1045 66 L1070 72 L1105 130 L1128 120 L1145 130 L1120 145 L1122 160 L1055 250 L1035 240 L1068 205 L970 165 L985 130 Z", 1],
  ["#628cc0", "M893 212 L942 225 L932 250 L965 275 L1000 285 L1005 272 L1048 262 L1015 340 L960 385 L942 417 L870 380 L838 430 L825 430 L860 375 L878 345 L868 335 L898 280 Z", 1],
  ["#edf2fb", "M870 380 L942 417 L915 468 L885 545 L860 515 L835 525 L798 497 L815 475 L787 468 L800 432 L838 432 Z", 1],
  ["#eceffa", "M915 468 L1008 505 L1008 615 L928 590 L937 570 L890 545 L880 520 Z", 1],
  ["#acc8e0", "M798 475 L815 480 L798 497 L835 525 L860 515 L880 525 L890 545 L937 570 L930 595 L950 602 L930 640 L940 650 L930 665 L905 655 L820 618 L815 600 L800 590 L778 630 L765 640 L735 625 L732 605 L745 585 L770 545 L762 520 Z", 1],
  ["#bcd2e8", "M800 590 L815 600 L808 612 L910 658 L870 722 L768 675 L782 630 Z", 1],
  ["#d8e4f3", "M950 600 L1010 618 L1030 635 L1050 670 L1052 720 L1035 745 L903 683 L915 660 L930 665 L940 650 L930 640 Z", 1],
  ["#cfdbef", "M903 683 L1035 745 L990 780 L960 830 L925 852 L815 803 Z", 1],
  ["#f8faff", "M815 803 L925 852 L932 900 L910 925 L780 858 Z", 1],
  ["#d8e4f4", "M1065 680 L1090 672 L1112 675 L1150 705 L1175 718 L1185 735 L1183 760 L1115 820 L1105 855 L1070 872 L1000 845 L988 832 L1030 775 L1060 770 L1068 750 Z", 1],
  ["#f7f9fe", "M400 1090 L575 1160 L540 1220 L480 1215 L358 1165 L365 1115 Z", 1],
  ["#dee8f5", "M625 1090 L750 1135 L705 1190 L670 1235 L665 1280 L648 1282 L540 1217 L580 1150 L600 1148 Z", 1],
  ["#f7f9fe", "M510 1262 L555 1270 L605 1303 L525 1415 L490 1402 L495 1370 L462 1345 L465 1310 Z", 0.88],
  ["#dfe8f5", "M605 1303 L650 1325 L680 1355 L645 1455 L525 1415 Z", 0.88],
  ["#7ba4cf", "M330 1388 L340 1388 L348 1360 L358 1375 L403 1380 L390 1405 L480 1448 L445 1507 L380 1475 L360 1492 L312 1468 L322 1395 Z", 1],
  ["#8aafd7", "M490 1402 L540 1420 L645 1455 L680 1360 L680 1400 L645 1507 L445 1507 L480 1448 Z", 1],
  ["#8aafd7", "M653 1290 L668 1305 L665 1325 L680 1355 L660 1330 Z", 1],
];

const places: [string, number, number][] = [
  ["Parsippany-", 634, 170],
  ["Troy", 610, 192],
  ["Little Falls", 1237, 164],
  ["Cedar Grove", 1176, 231],
  ["West Caldwell", 964, 273],
  ["Hanover", 692, 362],
  ["Livingston", 926, 445],
  ["Florham Park", 713, 476],
  ["Madison", 631, 584],
  ["Summit", 797, 744],
  ["Maplewood", 1046, 694],
  ["West Orange", 1147, 435],
  ["East Orange", 1246, 556],
  ["Clifton", 1366, 205],
  ["Passaic", 1469, 211],
  ["Nutley", 1378, 345],
  ["Bloomfield", 1303, 404],
  ["Belleville", 1406, 453],
  ["Kearny", 1420, 552],
  ["Ridgefield", 1817, 298],
  ["Secaucus", 1678, 469],
  ["Union City", 1774, 509],
  ["Fort Lee", 1930, 234],
  ["Cliffside Park", 1879, 347],
  ["Fairview", 1847, 381],
  ["Floral Park", 2703, 719],
  ["Glen Cove", 2910, 189],
  ["Oyster Bay", 3207, 177],
  ["Garden City", 2909, 713],
  ["Mineola", 2888, 624],
];

const cities: [string, number, number][] = [
  ["NEWARK", 1342, 679],
  ["JERSEY CITY", 1617, 709],
  ["NEW YORK", 1883, 700],
];

const grids: [string, number, number, number][] = [
  ["g-manhattan", 10, 30, 32],
  ["g-bronx", 22, 26, 28],
  ["g-queens", 24, 20, -18],
  ["g-newark", 26, 22, 20],
  ["g-hudson", 12, 26, 30],
];

function Layer({ pick, ...rest }: { pick: (t: Tile) => string[] | undefined } & Omit<React.SVGProps<SVGGElement>, "ref">) {
  return (
    <g {...rest}>
      {tiles.map((t) => (
        <g key={t.id} transform={t.transform}>
          {(pick(t) ?? []).map((d, i) => (
            <path key={i} d={d} vectorEffect="non-scaling-stroke" />
          ))}
        </g>
      ))}
    </g>
  );
}

function BaseMap() {
  return (
    <svg
      viewBox="608 155 2687 600"
      preserveAspectRatio="xMinYMin slice"
      className="block h-full w-full"
      role="img"
      aria-label="Map of New York City and surroundings"
    >
      <defs>
        {grids.map(([id, w, h, a]) => (
          <pattern key={id} id={id} width={w} height={h} patternUnits="userSpaceOnUse" patternTransform={`rotate(${a})`}>
            <path d={`M0 0H${w}M0 0V${h}`} fill="none" stroke="#e9eaea" strokeWidth="2.5" />
          </pattern>
        ))}
      </defs>
      <rect x="608" y="155" width="2687" height="600" fill="#fafaf8" />
      <Layer pick={(t) => t.grey} fill="#f5f5f3" />
      <Layer pick={(t) => t.green} fill="#f0f4ef" stroke="#f0f4ef" strokeWidth="5" strokeLinejoin="round" />
      {tiles.map((t) => (
        <g key={t.id} transform={t.transform}>
          {(t.grids ?? []).map(([d, id], i) => (
            <path key={i} d={d} fill={`url(#${id})`} />
          ))}
        </g>
      ))}
      <Layer pick={(t) => t.minor} fill="none" stroke="#ececec" strokeWidth="1.5" strokeLinejoin="round" />
      <Layer pick={(t) => t.water} fill="#d5d9dc" stroke="#d5d9dc" strokeWidth="2" strokeLinejoin="round" />
      <g fill="none" stroke="#d5d9dc" strokeLinejoin="round" strokeLinecap="round">
        {tiles.map((t) => (
          <g key={t.id} transform={t.transform}>
            {(t.channels ?? []).map(([d, w], i) => (
              <path key={i} d={d} strokeWidth={w} vectorEffect="non-scaling-stroke" />
            ))}
          </g>
        ))}
      </g>
      <Layer pick={(t) => t.streams} fill="none" stroke="#d9dde1" strokeWidth="2" strokeLinejoin="round" />
      <Layer pick={(t) => t.land} fill="#fafaf8" stroke="#fafaf8" strokeWidth="2" strokeLinejoin="round" />
      <Layer pick={(t) => t.roads} fill="none" stroke="#ebebeb" strokeWidth="5" strokeLinejoin="round" strokeLinecap="round" />
      <Layer pick={(t) => t.roads} fill="none" stroke="#fff" strokeWidth="3" strokeLinejoin="round" strokeLinecap="round" />
      <Layer pick={(t) => t.motorways} fill="none" stroke="#e2e3e3" strokeWidth="8" strokeLinejoin="round" strokeLinecap="round" />
      <Layer pick={(t) => t.motorways} fill="none" stroke="#fff" strokeWidth="5" strokeLinejoin="round" strokeLinecap="round" />
      <Layer pick={(t) => t.borders} fill="none" stroke="#ecd9db" strokeWidth="2" strokeDasharray="4 4" />
      <g className="font-['Inter'] font-semibold" fill="#9ca7b3" stroke="#fafaf8" strokeWidth="4" strokeLinejoin="round" paintOrder="stroke" textAnchor="middle">
        {places.map(([name, x, y]) => (
          <text key={name} x={x} y={y} className="text-[22px]">
            {name}
          </text>
        ))}
        {cities.map(([name, x, y]) => (
          <text key={name} x={x} y={y} className="text-[30px]">
            {name}
          </text>
        ))}
      </g>
      <g transform="translate(1700 140) scale(0.33333 0.40816)">
        {zones.map(([fill, d, opacity], i) => (
          <path key={i} d={d} fill={fill} opacity={opacity} />
        ))}
      </g>
    </svg>
  );
}

function SortIcon() {
  return (
    <svg viewBox="0 0 18 30" className="h-[30px] w-[18px]" fill="#dcdcdc" aria-hidden="true">
      <path d="M9 0 L18 14 H0 Z M0 16 H18 L9 30 Z" />
    </svg>
  );
}

const rows: [string, string][] = [
  ["10034", "25.210358056266"],
  ["10032", "23.5514066496164"],
  ["10013", "23.0305548765583"],
  ["10002", "22.6671091053889"],
  ["10033", "22.2614413466597"],
  ["10027", "22.0884540117417"],
  ["10026", "21.7316857899382"],
  ["10029", "21.3408299018055"],
  ["10006", "21.325"],
  ["10040", "21.1157981803143"],
];

const majors = [1, 3, 5, 7, 9, 11, 13, 15, 17, 19, 20];
const thirds = majors.slice(0, -1).flatMap((m, i) => {
  const step = (majors[i + 1] - m) / 3;
  return [m + step, m + 2 * step];
});
const at = (v: number) => ({ left: `${((v - 1) / 19) * 100}%` });

function DisplaySlider() {
  return (
    <div className="flex flex-col">
      <label htmlFor="display-number" className="pb-1 text-[30px]/[40px] font-bold">
        Display Number
      </label>
      <div className="mt-2 flex justify-between pr-1 text-[22px]/[32px] text-white">
        <span className="h-[30px] rounded-md bg-[#232323] px-[6px] text-[20px]/[30px] text-[#333]">1</span>
        <output htmlFor="display-number" className="rounded-md bg-[#5e8ac7] px-[6px]">
          20
        </output>
      </div>
      <input
        id="display-number"
        type="range"
        min={1}
        max={20}
        defaultValue={20}
        className="mt-[2px] h-[48px] w-full appearance-none bg-transparent [&::-webkit-slider-runnable-track]:h-[16px] [&::-webkit-slider-runnable-track]:rounded-lg [&::-webkit-slider-runnable-track]:bg-[#5e8ac7] [&::-webkit-slider-thumb]:mt-[-16px] [&::-webkit-slider-thumb]:size-[44px] [&::-webkit-slider-thumb]:appearance-none [&::-webkit-slider-thumb]:rounded-full [&::-webkit-slider-thumb]:border-2 [&::-webkit-slider-thumb]:border-[#ababab] [&::-webkit-slider-thumb]:bg-[#dedede] [&::-webkit-slider-thumb]:shadow-[2px_2px_6px_rgba(0,0,0,0.3)]"
      />
      <div className="relative -z-10 mt-[-16px] mr-6 ml-[20px] h-[48px] text-[18px]/[20px] text-[#99a4ac]">
        {thirds.map((v) => (
          <span key={v} className="absolute top-0 h-2 w-[2px] bg-[#6b6b6b]" style={at(v)} />
        ))}
        {majors.map((v) => (
          <React.Fragment key={v}>
            <span className="absolute top-0 h-4 w-[2px] bg-[#465a7d]" style={at(v)} />
            <span className="absolute top-6 -translate-x-1/2" style={at(v)}>
              {v}
            </span>
          </React.Fragment>
        ))}
      </div>
    </div>
  );
}

function Legend() {
  return (
    <div className="absolute right-5 bottom-[52px] rounded-[10px] bg-white/90 px-4 pt-3 pb-[36px] font-['Liberation_Sans',sans-serif] text-[28px]/[36px] text-[#555] shadow-[0_0_30px_rgba(0,0,0,0.2)]">
      <p className="font-bold">Average Number of Violations</p>
      <div className="mt-[22px] flex h-[208px]">
        <div className="w-[36px] bg-[linear-gradient(#f8faff,#dfe6f4_16%,#c0d3e8_28%,#a5c6df_40%,#74a2cd_54%,#5b89c0_64%,#426ead_76%,#2c4a8c_90%,#203063)]" />
        <ol className="flex flex-col gap-1 pt-5">
          {[21, 22, 23, 24, 25].map((n) => (
            <li key={n} className="flex items-center gap-1">
              <span className="h-[2px] w-[8px] bg-[#444]" />
              {n}
            </li>
          ))}
        </ol>
      </div>
    </div>
  );
}

export default function App() {
  return (
    <div className="isolate h-screen overflow-hidden bg-[#272727] pr-[25px] pl-[29px] font-['Lato',sans-serif] text-[30px]/[42px] text-white">
      <nav className="flex h-[113px] bg-[#465a7d]">
        <a href="#home" className="px-[30px] pt-[30px] text-[37px]/[42px]">
          Tasty &amp; Safety
        </a>
        <a href="#compare" className="px-[30px] pt-[32px]">
          Compare
        </a>
        <a href="#map" aria-current="page" className="bg-[#34415b] px-[30px] pt-[32px]">
          Map
        </a>
        <a href="#find" className="px-[30px] pt-[32px]">
          Find Your Restaurant
        </a>
      </nav>

      <div className="grid grid-cols-12 pt-[42px]">
        <aside className="col-span-2 px-[30px]">
          <label htmlFor="borough" className="block pb-[2px] leading-[40px] font-bold">
            Borough map
          </label>
          <div className="relative mt-[10px]">
            <select
              id="borough"
              defaultValue="Manhattan"
              className="h-[68px] w-full appearance-none rounded-lg border-2 border-[#ccc] bg-white px-6 text-[#333]"
            >
              <option>Manhattan</option>
              <option>Brooklyn</option>
              <option>Queens</option>
              <option>Bronx</option>
              <option>Staten Island</option>
            </select>
            <svg viewBox="0 0 20 10" className="pointer-events-none absolute top-[28px] right-[36px] h-[10px] w-[20px]" fill="#333" aria-hidden="true">
              <path d="M0 0 H20 L10 10 Z" />
            </svg>
          </div>

          <fieldset className="mt-[70px]">
            <legend className="font-bold">Violations</legend>
            <label className="mt-[10px] flex items-center gap-[14px]">
              <input type="radio" name="violations" className="-ml-[2px] size-[28px] shrink-0 appearance-none rounded-full bg-white checked:border-[10px] checked:border-[#5a8bff]" />
              Lowest Violations
            </label>
            <label className="mt-[10px] flex items-center gap-[14px]">
              <input
                type="radio"
                name="violations"
                defaultChecked
                className="-ml-[2px] size-[28px] shrink-0 appearance-none rounded-full bg-white checked:border-[10px] checked:border-[#5a8bff]"
              />
              Highest Violations
            </label>
          </fieldset>
        </aside>

        <main className="col-span-10 px-[30px]">
          <div className="relative h-[600px] overflow-hidden">
            <BaseMap />
            <div className="absolute top-5 left-5 flex w-[52px] flex-col overflow-hidden rounded-lg bg-white text-black shadow-[0_2px_10px_rgba(0,0,0,0.65)]">
              <button type="button" aria-label="Zoom in" className="flex h-[52px] items-center justify-center border-b-2 border-[#ccc] pt-2">
                <svg viewBox="0 0 20 20" className="size-5" stroke="currentColor" strokeWidth="4" aria-hidden="true">
                  <path d="M0 10 H20 M10 0 V20" />
                </svg>
              </button>
              <button type="button" aria-label="Zoom out" className="flex h-[52px] items-center justify-center pt-1">
                <svg viewBox="0 0 20 20" className="size-5" stroke="currentColor" strokeWidth="4" aria-hidden="true">
                  <path d="M0 10 H20" />
                </svg>
              </button>
            </div>
            <Legend />
            <p className="absolute right-0 bottom-0 bg-white/70 px-[10px] font-['Liberation_Sans',sans-serif] text-[22px]/[32px] text-[#333]">
              <a href="#leaflet" className="text-[#3f76a8]">
                Leaflet
              </a>{" "}
              | ©{" "}
              <a href="#osm" className="text-[#3f76a8]">
                OpenStreetMap
              </a>{" "}
              ©{" "}
              <a href="#cartodb" className="text-[#3f76a8]">
                CartoDB
              </a>
            </p>
          </div>

          <DisplaySlider />

          <div className="mt-[36px] flex h-[46px] items-center justify-between font-bold text-[#333]">
            <label className="flex items-center gap-2">
              Show
              <span className="relative flex">
                <select defaultValue="10" className="h-[32px] w-[102px] appearance-none rounded-md bg-white px-4 text-[24px]/[32px] font-normal text-[#333]">
                  <option>10</option>
                  <option>25</option>
                  <option>50</option>
                  <option>100</option>
                </select>
                <span className="pointer-events-none absolute top-0 right-0 flex h-[32px] w-[28px] items-center justify-center rounded-r-md bg-linear-to-b from-[#7aa5fb] to-[#3a6dfb]">
                  <svg viewBox="0 0 14 20" className="h-5 w-[14px]" fill="none" stroke="#fff" strokeWidth="2.5" strokeLinecap="round" strokeLinejoin="round" aria-hidden="true">
                    <path d="M2 7 L7 2 L12 7 M2 13 L7 18 L12 13" />
                  </svg>
                </span>
              </span>
              entries
            </label>
            <label className="flex items-center gap-4">
              Search:
              <input type="search" className="h-[46px] w-[344px] bg-white px-3 font-normal" />
            </label>
          </div>

          <table className="mt-[14px] w-full table-fixed border-collapse">
            <thead>
              <tr className="h-[78px] border-b-2 border-[#1a1a1a]">
                <th className="w-[12.8%]" aria-label="Row" />
                <th className="w-[34.6%] pt-0 pr-[10px] pb-1 pl-[36px]">
                  <button type="button" className="flex w-full items-center justify-between">
                    ZIPCODE
                    <SortIcon />
                  </button>
                </th>
                <th className="pt-0 pr-[10px] pb-1">
                  <button type="button" className="flex w-full items-center justify-end gap-[9px]">
                    Avg_Violations
                    <SortIcon />
                  </button>
                </th>
              </tr>
            </thead>
            <tbody className="bg-black">
              {rows.map(([zip, avg], i) => (
                <tr key={zip} className="h-[76px] border-b-2 border-[#ddd]">
                  <td className="px-5 py-0">{i + 1}</td>
                  <td className="px-5 py-0">{zip}</td>
                  <td className="px-5 py-0 text-right">{avg}</td>
                </tr>
              ))}
            </tbody>
          </table>
        </main>
      </div>
    </div>
  );
}
